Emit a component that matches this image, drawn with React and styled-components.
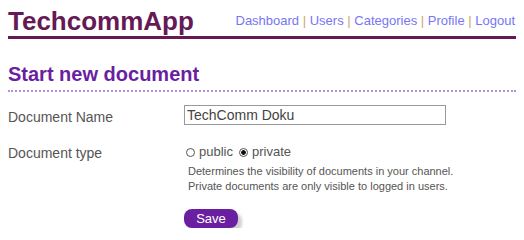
import React from "react";
import styled, { createGlobalStyle } from "styled-components";

const Global = createGlobalStyle`
  body {
    margin: 8px;
    font-family: "Liberation Sans", Arial, sans-serif;
    background: #fff;
  }
`;

const Header = styled.header`
  display: flex;
  justify-content: space-between;
  align-items: flex-end;
  border-bottom: 3px solid #661a55;
  height: 28px;
`;

const Logo = styled.h1`
  margin: 0 0 1px;
  font-size: 26px;
  font-weight: bold;
  color: #661a55;
  line-height: 28px;
`;

const Nav = styled.nav`
  font-size: 13px;
  color: #7676f4;
  padding-right: 1px;
  line-height: 18px;
  padding-bottom: 6px;
`;

const NavLink = styled.a`
  color: #7676f4;
  text-decoration: none;
`;

const Sep = styled.span`
  color: #d2a36a;
`;

const Title = styled.h2`
  margin: 22px 0 0;
  font-size: 20px;
  font-weight: bold;
  color: #6a1fa0;
  line-height: 26px;
  padding-bottom: 3px;
  border-bottom: 2px dotted #b48fd8;
`;

const Form = styled.form`
  display: grid;
  grid-template-columns: 176px 1fr;
  margin-top: 13px;
  row-gap: 11px;
`;

const Label = styled.label`
  font-size: 14px;
  color: #555;
  line-height: 20px;
  padding-top: ${(p) => p.$top || 0}px;
`;

const TextInput = styled.input`
  width: 262px;
  height: 20px;
  box-sizing: border-box;
  border: 1px solid #999;
  padding: 0 2px;
  font-family: "Liberation Sans", Arial, sans-serif;
  font-size: 14px;
  color: #444;
  outline: none;
`;

const Field = styled.div`
  display: flex;
  flex-direction: column;
`;

const RadioRow = styled.div`
  display: flex;
  align-items: center;
  font-size: 13px;
  color: #555;
  line-height: 16px;
  margin-top: 6px;
`;

const RadioLabel = styled.label`
  display: flex;
  align-items: center;
  margin-right: 4px;
`;

const Radio = styled.input.attrs({ type: "radio" })`
  appearance: none;
  width: 9px;
  height: 9px;
  margin: 0 4px 0 2px;
  border: 1px solid #555;
  border-radius: 50%;
  box-sizing: border-box;
  background: #fff;
  &:checked {
    background: radial-gradient(circle, #111 0 2px, #fff 2.6px);
  }
`;

const Help = styled.p`
  margin: 4px 0 0 4px;
  font-size: 11px;
  color: #555;
  line-height: 15px;
`;

const Save = styled.button`
  grid-column: 2;
  justify-self: start;
  margin-top: 4px;
  width: 54px;
  height: 19px;
  border: none;
  border-radius: 8px;
  background: #6a1fa0;
  color: #fff;
  font-family: "Liberation Sans", Arial, sans-serif;
  font-size: 13px;
  padding: 0;
  box-shadow: 4px 4px 3px #cfcfcf;
`;

const links = ["Dashboard", "Users", "Categories", "Profile", "Logout"];

export default function App() {
  return (
    <>
      <Global />
      <Header>
        <Logo>TechcommApp</Logo>
        <Nav>
          {links.map((l, i) => (
            <React.Fragment key={l}>
              {i > 0 && <Sep> | </Sep>}
              <NavLink href="#">{l}</NavLink>
            </React.Fragment>
          ))}
        </Nav>
      </Header>
      <Title>Start new document</Title>
      <Form onSubmit={(e) => e.preventDefault()}>
        <Label $top={2}>Document Name</Label>
        <Field>
          <TextInput defaultValue="TechComm Doku" />
        </Field>
        <Label $top={5}>Document type</Label>
        <Field>
          <RadioRow>
            <RadioLabel>
              <Radio name="type" value="public" />
              public
            </RadioLabel>
            <RadioLabel>
              <Radio name="type" value="private" defaultChecked />
              private
            </RadioLabel>
          </RadioRow>
          <Help>
            Determines the visibility of documents in your channel.
            <br />
            Private documents are only visible to logged in users.
          </Help>
        </Field>
        <Save type="submit">Save</Save>
      </Form>
    </>
  );
}
